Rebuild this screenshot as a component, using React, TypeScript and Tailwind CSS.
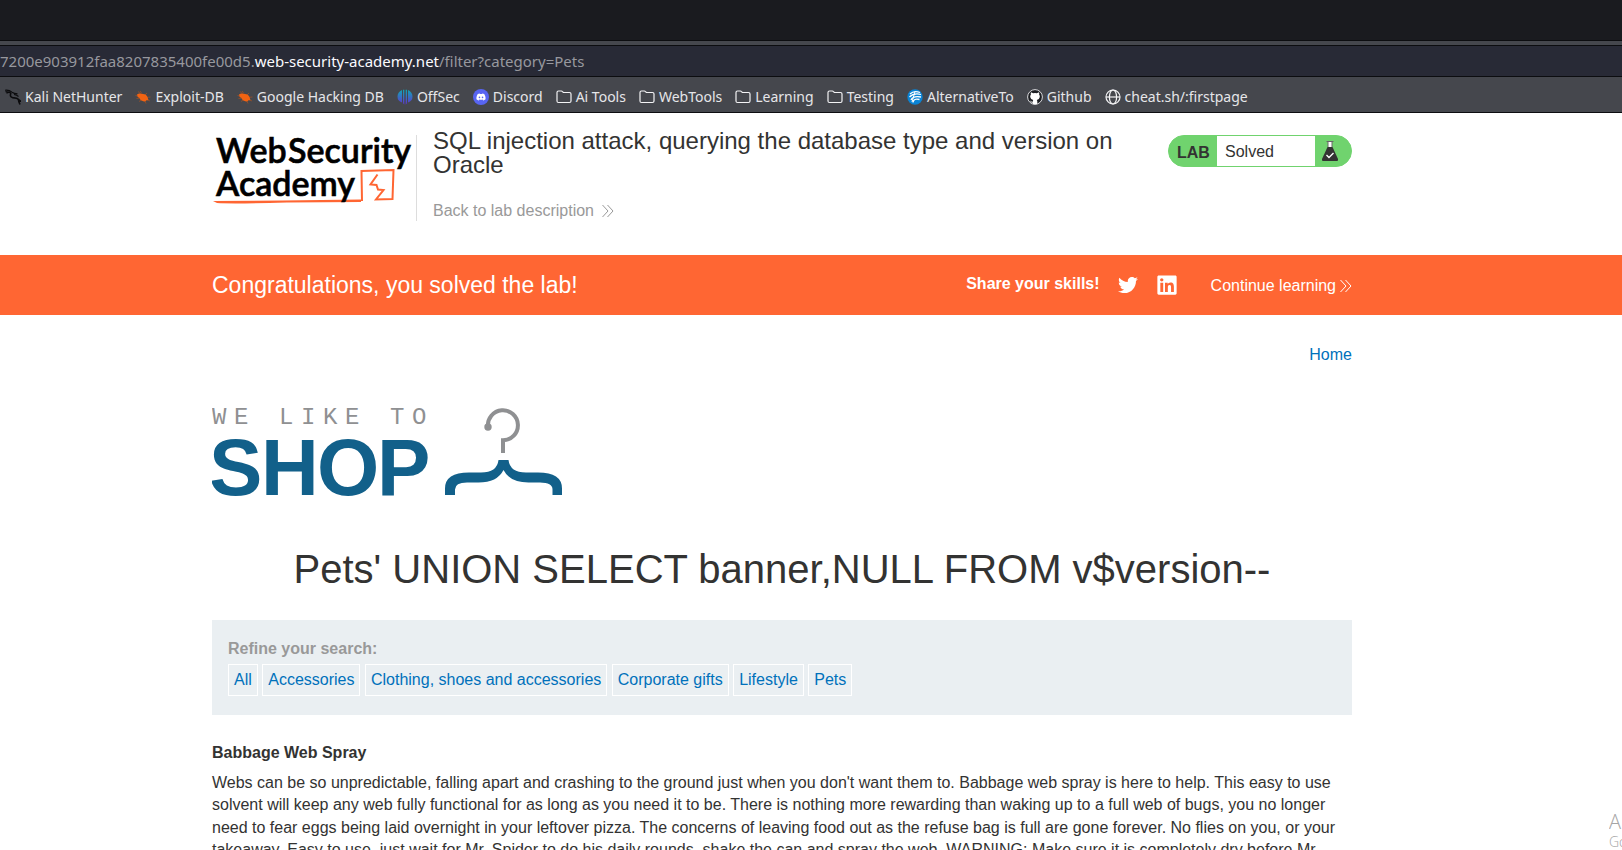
import type { ReactNode, SVGProps } from "react";
import { FaDiscord, FaLinkedin, FaTwitter } from "react-icons/fa";

const KaliIcon = () => (
  <svg viewBox="0 0 16 16" className="size-4" fill="none" stroke="#0b0b0d" aria-hidden="true">
    <path d="M0 1.200Q4 .6 7 3.200Q9 4.600 12.500 4.900M1.500 4.200Q4 2.500 6 4.200M.5 2.600L5 3.200M9 5.500Q12 6 13.500 7.500" strokeWidth="1.100" />
    <path d="M6 4Q4.300 7.500 7.500 8.600L11.500 9.200Q14 9.800 13.800 12.500L15 15.500M13 10.500Q15.500 11 15.500 13" strokeWidth="1.600" />
  </svg>
);

const BugIcon = () => (
  <svg viewBox="0 0 16 16" className="size-4" aria-hidden="true">
    <path d="M3 2.500L7 6M5 2L8 6M.5 6.500L5 7.500M1.500 9.500L6 9M4 12.500L8 10M12 4L9 7M15.500 8L10 8.500M15 12L11 10M11 14.500L9.500 11" stroke="#a9501f" strokeWidth=".7" />
    <path d="M2 5.500Q4 4 7 5Q11 4.500 12.500 8L13.500 11.200L11.500 11.200Q10 13.500 7 11.800Q5 11 4.500 9Q2 8 2 5.500Z" fill="#f26312" />
  </svg>
);

const OffSecIcon = () => (
  <svg viewBox="0 0 16 16" className="size-4" aria-hidden="true">
    <defs>
      <linearGradient id="offsec" x1="0" y1="0" x2="0" y2="1">
        <stop offset="0" stopColor="#10a5b5" />
        <stop offset="1" stopColor="#5f35cf" />
      </linearGradient>
    </defs>
    <path d="M5 1V13.500Q.5 12 .5 7.500T5 1ZM6 .8H7.300V15.500Q6 15 6 13ZM8.700 .8H10V13Q10 15 8.700 15.500ZM11 1Q15.500 3 15.500 7.500T11 13.500Z" fill="url(#offsec)" />
  </svg>
);

const DiscordIcon = () => (
  <span className="flex size-4 items-center justify-center rounded-full bg-[#5865f2]">
    <FaDiscord className="size-[10px] text-white" />
  </span>
);

const FolderIcon = () => (
  <svg viewBox="0 0 16 16" className="size-4" fill="none" stroke="#f3f3f5" strokeWidth="1.200" aria-hidden="true">
    <path d="M1 3.500Q1 2 2.500 2H5.300Q6 2 6.500 2.600L7.300 3.500H13.500Q15 3.500 15 5V12Q15 13.500 13.500 13.500H2.500Q1 13.500 1 12Z" />
  </svg>
);

const AlternativeIcon = () => (
  <svg viewBox="0 0 16 16" className="size-4" aria-hidden="true">
    <circle cx="8" cy="8" r="7.700" fill="#0a84d6" />
    <path d="M3 5Q7 1 13 3.500M2.500 8Q7 3.500 14 5.500M4 11Q6 6.500 14 8M6 13.500Q6.500 9 12.500 10.500" fill="none" stroke="#fff" strokeWidth="1.300" />
    <path d="M8 2.500L5 13" stroke="#fff" strokeWidth="1" />
  </svg>
);

const GithubIcon = () => (
  <svg viewBox="0 0 16 16" className="size-4" aria-hidden="true">
    <circle cx="8" cy="8" r="7.400" fill="#1d1f23" stroke="#d9d9dc" />
    <path d="M4 3.200L6.200 4.300Q8 3.900 9.800 4.300L12 3.200Q12.500 4.500 12.100 5.400Q13 6.500 12.800 8Q12.400 10.500 9.800 10.900Q10.300 11.500 10.300 12.500V15Q8 15.700 5.700 15V13.600Q4 13.900 3.400 12.300L3 11.800Q4 11.600 4.400 12.400Q5 13 5.800 12.700Q5.800 11.500 6.200 10.900Q3.600 10.500 3.200 8Q3 6.500 3.900 5.400Q3.500 4.500 4 3.200Z" fill="#fff" />
  </svg>
);

const GlobeIcon = () => (
  <svg viewBox="0 0 16 16" className="size-4" fill="none" stroke="#f3f3f5" strokeWidth="1.200" aria-hidden="true">
    <circle cx="8" cy="8" r="7" />
    <ellipse cx="8" cy="8" rx="3.600" ry="7" />
    <path d="M1 8H15" />
  </svg>
);

const bookmarks: { label: string; icon: ReactNode }[] = [
  { label: "Kali NetHunter", icon: <KaliIcon /> },
  { label: "Exploit-DB", icon: <BugIcon /> },
  { label: "Google Hacking DB", icon: <BugIcon /> },
  { label: "OffSec", icon: <OffSecIcon /> },
  { label: "Discord", icon: <DiscordIcon /> },
  { label: "Ai Tools", icon: <FolderIcon /> },
  { label: "WebTools", icon: <FolderIcon /> },
  { label: "Learning", icon: <FolderIcon /> },
  { label: "Testing", icon: <FolderIcon /> },
  { label: "AlternativeTo", icon: <AlternativeIcon /> },
  { label: "Github", icon: <GithubIcon /> },
  { label: "cheat.sh/:firstpage", icon: <GlobeIcon /> },
];

const categories = ["All", "Accessories", "Clothing, shoes and accessories", "Corporate gifts", "Lifestyle", "Pets"];

const DoubleChevron = (props: SVGProps<SVGSVGElement>) => (
  <svg viewBox="0 0 12 14" width="12" height="14" fill="none" stroke="currentColor" aria-hidden="true" {...props}>
    <path d="M.5 1L6 7L.5 13M5.500 1L11 7L5.500 13" />
  </svg>
);

const AcademyLogo = () => (
  <svg viewBox="0 0 204 74" className="h-[74px] w-[204px] shrink-0" role="img" aria-label="Web Security Academy">
    <path d="M1 66L70 65.500L149 64.500V67L75 67.500Q20 69 5 68Z" fill="#ff6633" />
    <path d="M150 66L149.500 36L181.500 35L180.500 64L164 64.500L171.500 55L166 54.500L164.500 50L158.500 49.500L165.500 39.500" fill="none" stroke="#ff6633" strokeWidth="2" />
    <g fontFamily="Lato, sans-serif" fontWeight="600" fontSize="34" fill="#000" stroke="#000" strokeWidth=".6">
      <text x="4" y="28">Web</text>
      <text x="76" y="28">Security</text>
      <text x="4" y="61">Academy</text>
    </g>
  </svg>
);

const ShopLogo = () => (
  <svg viewBox="0 0 352 92" className="h-[92px] w-[352px]" role="img" aria-label="We like to shop">
    <text x="0 22 44 67 89 111 133 155 178 200" y="19" fontFamily="'Liberation Mono', monospace" fontSize="24" fill="#8f9092">
      WE LIKE TO
    </text>
    <text x="-3 49 105 165" y="90" fontFamily="'Liberation Sans', sans-serif" fontWeight="700" fontSize="80" fill="#12608a">SHOP</text>
    <circle cx="276" cy="22" r="3.700" fill="#8f9092" />
    <path d="M276 22A15 15 0 1 1 291 35.300V48" fill="none" stroke="#8f9092" strokeWidth="4" />
    <path d="M286.500 55H296.500Q298 67.500 314 67.500H326Q350 67.500 350 83.500V90H340.500V84.500Q340.500 77.500 328 77.500H318Q298 78 291.500 65Q285 78 265 77.500H255Q243 77.500 243 84.500V90H233V83.500Q233 67.500 257 67.500H269Q285 67.500 286.500 55Z" fill="#12608a" />
  </svg>
);

const LabStatus = () => (
  <div className="flex h-8 w-[184px] shrink-0 overflow-hidden rounded-full border border-[#70d36e] bg-[#70d36e] text-[#333332]">
    <strong className="w-12 pl-2 leading-[33px]">LAB</strong>
    <p className="flex-1 bg-white pl-2 leading-8">Solved</p>
    <span className="flex w-9 items-center pl-1.5">
      <svg viewBox="0 0 18 22" className="h-[22px] w-[18px]" role="img" aria-label="Solved lab">
        <path d="M7 2H11V9H7Z" fill="#fff" />
        <path d="M5.500 1.500H12.500M7 2V7M11 2V7" stroke="#666" fill="none" />
        <path d="M6.500 7H11.500L17 19Q17.500 21 16 21H2Q.5 21 1 19Z" fill="#333332" />
        <path d="M5.500 15L8 17.500L12.500 13" fill="none" stroke="#fff" strokeWidth="1.400" />
      </svg>
    </span>
  </div>
);

const Container = ({ children, className = "" }: { children: ReactNode; className?: string }) => (
  <div className="pr-[58px]">
    <div className={`mx-auto max-w-[1140px] ${className}`}>{children}</div>
  </div>
);

export default function App() {
  return (
    <div className="h-screen overflow-hidden bg-white font-['Liberation_Sans',Arial,sans-serif] text-base text-[#333332]">
      <header className="bg-[#45474d] font-['Noto_Sans',sans-serif] text-[15px] leading-5">
        <div className="h-[41px] border-b border-[#0c0d10] bg-[#1a1b1f]" />
        <div className="mt-1 flex h-8 items-center overflow-hidden border-y border-[#0c0d10] bg-[#282a36] whitespace-nowrap text-[#97989e]">
          <p>
            7200e903912faa8207835400fe00d5.<span className="text-[#fbfbfe]">web-security-academy.net</span>/filter?category=Pets
          </p>
        </div>
        <nav aria-label="Bookmarks" className="flex h-9 items-center gap-[13px] border-b border-[#0c0d10] pt-1 pl-[5px] text-sm text-[#e6e6e9]">
          {bookmarks.map(({ label, icon }) => (
            <a key={label} href="#" className="flex items-center gap-1 whitespace-nowrap">
              {icon}
              {label}
            </a>
          ))}
        </nav>
      </header>

      <Container className="flex items-start pt-[22px] pb-8">
        <div className="flex h-[86px] shrink-0 border-r border-[#dddddd]">
          <AcademyLogo />
        </div>
        <div className="flex-1 pl-4">
          <h2 className="-mt-1.5 max-w-[700px] text-2xl leading-6">
            SQL injection attack, querying the database type and version on Oracle
          </h2>
          <a href="#" className="mt-[22px] flex items-center gap-2 text-[#999999]">
            Back to lab description
            <DoubleChevron />
          </a>
        </div>
        <LabStatus />
      </Container>

      <section className="bg-[#ff6633] text-white">
        <Container className="flex h-[60px] items-center">
          <h4 className="flex-1 text-[23px]">Congratulations, you solved the lab!</h4>
          <strong className="mr-[18px] pb-[3px]">Share your skills!</strong>
          <a href="#" aria-label="Twitter" className="mr-[18px]">
            <FaTwitter className="size-5" />
          </a>
          <a href="#" aria-label="LinkedIn" className="mr-[33px]">
            <FaLinkedin className="size-[22px]" />
          </a>
          <a href="#" className="flex items-center gap-1 pt-px">
            Continue learning
            <DoubleChevron />
          </a>
        </Container>
      </section>

      <Container>
        <nav className="flex justify-end pt-7 text-[#0071bb]">
          <a href="#">Home</a>
        </nav>
        <div className="pt-[38px]">
          <ShopLogo />
        </div>
        <h1 className="pt-[42px] text-center text-[40px] leading-[60px]">Pets' UNION SELECT banner,NULL FROM v$version--</h1>
        <section className="mt-[21px] bg-[#eaeff2] px-4 pt-[17px] pb-[19px]">
          <strong className="block text-[#999999]">Refine your search:</strong>
          <div className="mt-[3px]">
            {categories.map((name) => (
              <span key={name}>
                <a href="#" className="inline-block border border-white px-[5px] py-[3px] align-top text-[#0071bb]">
                  {name}
                </a>{" "}
              </span>
            ))}
          </div>
        </section>
        <article>
          <h3 className="mt-[26px] font-bold">Babbage Web Spray</h3>
          <p className="mt-[7px] leading-[1.4]">
            Webs can be so unpredictable, falling apart and crashing to the ground just when you don't want them to. Babbage web spray is here to help. This easy to use solvent will keep any web fully functional for as long as you need it to be. There is nothing more rewarding than waking up to a full web of bugs, you no longer need to fear eggs being laid overnight in your leftover pizza. The concerns of leaving food out as the refuse bag is full are gone forever. No flies on you, or your takeaway. Easy to use, just wait for Mr. Spider to do his daily rounds, shake the can and spray the web. WARNING: Make sure it is completely dry before Mr.
          </p>
        </article>
      </Container>

      <aside className="absolute right-0 bottom-0 w-[13px] overflow-hidden font-['Open_Sans',sans-serif] font-light whitespace-nowrap text-[#a5a5a5]">
        <p className="text-xl leading-6">A</p>
        <p className="text-sm leading-4">Go</p>
      </aside>
    </div>
  );
}
